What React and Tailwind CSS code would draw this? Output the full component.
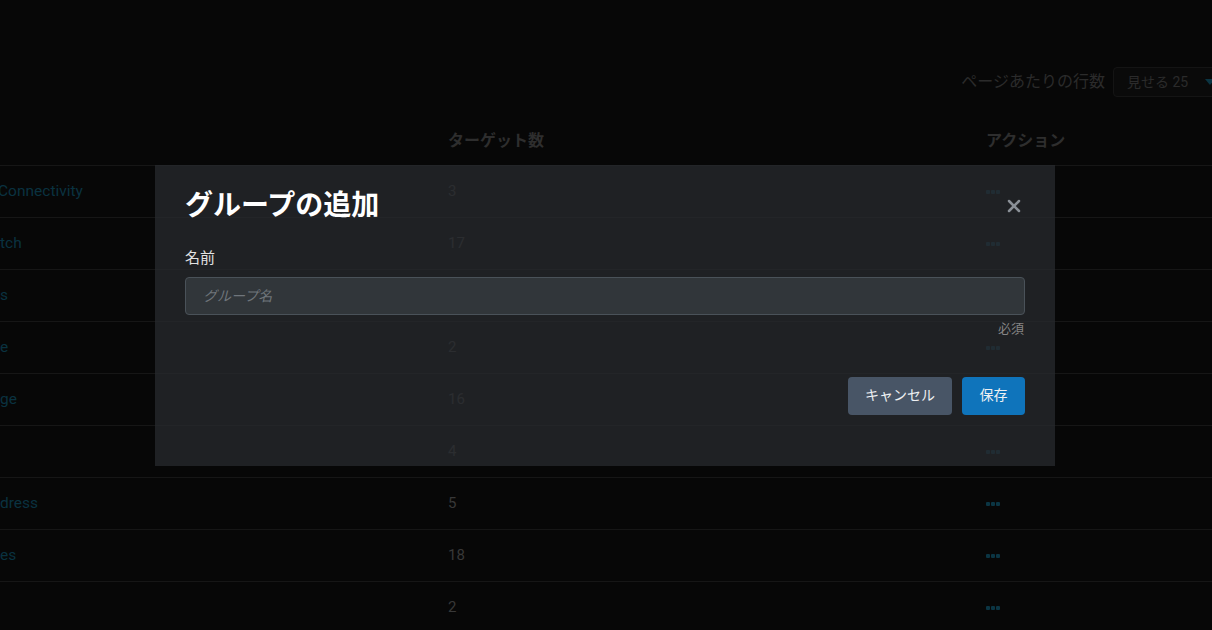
import { X } from 'lucide-react';

const rows = [
  { name: 'Connectivity', shift: '-ml-[2px]', count: '3' },
  { name: 'tch', shift: '', count: '17' },
  { name: 's', shift: '', count: '' },
  { name: 'e', shift: '', count: '2' },
  { name: 'ge', shift: '', count: '16' },
  { name: '', shift: '', count: '4' },
  { name: 'dress', shift: '', count: '5' },
  { name: 'es', shift: '', count: '18' },
  { name: '', shift: '', count: '2' },
];

function Dots() {
  return (
    <span className="flex items-center gap-[1px]">
      <span className="w-[4px] h-[4px] rounded-[1px] bg-[#0b3543]" />
      <span className="w-[4px] h-[4px] rounded-[1px] bg-[#0b3543]" />
      <span className="w-[4px] h-[4px] rounded-[1px] bg-[#0b3543]" />
    </span>
  );
}

export default function App() {
  return (
    <div
      className="relative w-[1212px] h-[630px] overflow-hidden bg-[#070707]"
      style={{ fontFamily: 'Roboto, "Noto Sans CJK JP", sans-serif' }}
    >
      <div className="pt-[67px] flex items-center justify-end gap-[8px]">
        <span className="text-[16px] text-[#2b2b2b]">ページあたりの行数</span>
        <div className="-mr-[12px] w-[111px] h-[30px] flex items-center justify-between pl-[13px] pr-[8px] rounded-[4px] border border-[#141414] bg-[#0a0a0a]">
          <span className="text-[14px] text-[#2b2b2b]">見せる 25</span>
          <span className="w-0 h-0 border-l-[5px] border-r-[5px] border-t-[6px] border-l-transparent border-r-transparent border-t-[#0b3543]" />
        </div>
      </div>

      <div className="mt-[19px]">
        <div className="grid grid-cols-[448px_538px_1fr] h-[50px] items-center border-b border-[#161616]">
          <div />
          <div className="text-[16px] font-bold text-[#2e2e2e]">ターゲット数</div>
          <div className="text-[16px] font-bold text-[#2e2e2e]">アクション</div>
        </div>
        {rows.map((r, i) => (
          <div
            key={i}
            className="grid grid-cols-[448px_538px_1fr] h-[52px] items-center border-b border-[#161616]"
          >
            <div className={`text-[15.5px] text-[#0a3240] ${r.shift}`}>{r.name}</div>
            <div className="text-[15px] text-[#383838]">{r.count}</div>
            <div className="flex items-center">{r.count || i === 2 ? <Dots /> : null}</div>
          </div>
        ))}
      </div>

      <div className="absolute left-[155px] top-[165px] w-[900px] h-[301px] bg-[rgba(40,42,46,0.76)] px-[30px] pt-[22px]">
        <div className="flex items-center justify-between">
          <h2 className="text-[28px] font-bold text-white leading-[38px]">グループの追加</h2>
          <X className="w-[20px] h-[20px] text-[#8a9097] mr-[1px]" strokeWidth={3} />
        </div>
        <label className="block mt-[22px] text-[15px] text-[#e2e2e2] leading-[22px]">名前</label>
        <div className="mt-[8px] h-[38px] flex items-center px-[17px] rounded-[4px] border border-[#4a5259] bg-[#31363a]">
          <span className="text-[14px] italic text-[#6f757b]">グループ名</span>
        </div>
        <div className="mt-[4px] text-right text-[13px] text-[#858585] pr-[1px]">必須</div>
        <div className="mt-[38px] flex justify-end gap-[10px]">
          <button className="h-[38px] w-[104px] rounded-[4px] bg-[#485566] text-[14px] text-[#eef0f2]">
            キャンセル
          </button>
          <button className="h-[38px] w-[63px] rounded-[4px] bg-[#0f74bb] text-[14px] text-[#eef0f2]">
            保存
          </button>
        </div>
      </div>
    </div>
  );
}
